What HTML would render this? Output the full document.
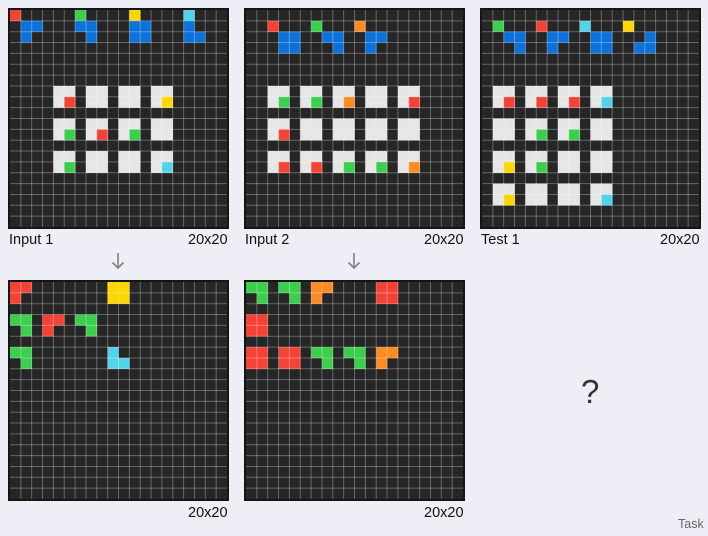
<!DOCTYPE html>
<html><head><meta charset="utf-8"><style>
body{margin:0;width:708px;height:536px;background:#eeeff6;font-family:"Liberation Sans",sans-serif;position:relative;overflow:hidden}
.g{position:absolute;width:217px;height:217px;border:2px solid #151515;background:#262626}
.lbl{position:absolute;font-size:14.5px;color:#111}
</style></head><body>
<div id="root"></div>
<div class="lbl" style="left:9px;top:232px">Input 1</div><div class="lbl" style="left:188px;top:232px">20x20</div>
<div class="lbl" style="left:245px;top:232px">Input 2</div><div class="lbl" style="left:424px;top:232px">20x20</div>
<div class="lbl" style="left:481px;top:232px">Test 1</div><div class="lbl" style="left:660px;top:232px">20x20</div>
<div class="lbl" style="left:188px;top:505px">20x20</div>
<div class="lbl" style="left:424px;top:505px">20x20</div>
<svg style="position:absolute;left:111px;top:252px" width="14" height="18"><path d="M7 1V16M1.5 10.5L7 16L12.5 10.5" stroke="#808080" stroke-width="1.6" fill="none"/></svg>
<svg style="position:absolute;left:347px;top:252px" width="14" height="18"><path d="M7 1V16M1.5 10.5L7 16L12.5 10.5" stroke="#808080" stroke-width="1.6" fill="none"/></svg>
<div style="position:absolute;left:581px;top:373px;font-size:33px;color:#333">?</div>
<div style="position:absolute;left:678px;top:517px;font-size:12.5px;color:#666">Task</div>
<script>
var C={R:'#f44336',G:'#3ccf4e',Y:'#ffd600',C:'#53d3ea',B:'#0c72d9',O:'#fb8c23',W:'#e6e6e6'};
function grid(x,y,cells){
 var s='<svg class="g" style="left:'+x+'px;top:'+y+'px" width="217" height="217" viewBox="0 0 217 217">';
 var c=217/20;
 cells.forEach(function(a){s+='<rect x="'+(a[1]*c)+'" y="'+(a[0]*c)+'" width="'+(c+0.2)+'" height="'+(c+0.2)+'" fill="'+C[a[2]]+'"/>';});
 for(var i=1;i<20;i++){var p=(i*c).toFixed(2);s+='<line x1="'+p+'" y1="0" x2="'+p+'" y2="217" stroke="rgba(255,255,255,0.3)" stroke-width="1"/><line y1="'+p+'" x1="0" y2="'+p+'" x2="217" stroke="rgba(255,255,255,0.3)" stroke-width="1"/>';}
 s+='</svg>';document.getElementById('root').insertAdjacentHTML('beforeend',s);
}
function blocks(rows,cols){var o=[];rows.forEach(function(r){cols.forEach(function(c){o.push([r,c,'W'],[r,c+1,'W'],[r+1,c,'W'],[r+1,c+1,'W']);});});return o;}
function P(str){return str.split(' ').map(function(t){var p=t.split(',');return [+p[0],+p[1],p[2]];});}
grid(8,8,blocks([7,10,13],[4,7,10,13]).concat(P('0,0,R 0,6,G 0,11,Y 0,16,C 1,1,B 1,2,B 1,6,B 1,7,B 1,11,B 1,12,B 1,16,B 2,1,B 2,7,B 2,11,B 2,12,B 2,16,B 2,17,B 8,5,R 8,14,Y 11,5,G 11,8,R 11,11,G 14,5,G 14,14,C')));
grid(244,8,blocks([7,10,13],[2,5,8,11,14]).concat(P('1,2,R 1,6,G 1,10,O 2,3,B 2,4,B 2,7,B 2,8,B 2,11,B 2,12,B 3,3,B 3,4,B 3,8,B 3,11,B 8,3,G 8,6,G 8,9,O 8,15,R 11,3,R 14,3,R 14,6,R 14,9,G 14,12,G 14,15,O')));
grid(480,8,blocks([7,10,13,16],[1,4,7,10]).concat(P('1,1,G 1,5,R 1,9,C 1,13,Y 2,2,B 2,3,B 2,6,B 2,7,B 2,10,B 2,11,B 2,15,B 3,3,B 3,6,B 3,10,B 3,11,B 3,14,B 3,15,B 8,2,R 8,5,R 8,8,R 8,11,C 11,5,G 11,8,G 14,2,Y 14,5,G 17,2,Y 17,11,C')));
grid(8,280,P('0,0,R 0,1,R 1,0,R 0,9,Y 0,10,Y 1,9,Y 1,10,Y 3,0,G 3,1,G 4,1,G 3,3,R 3,4,R 4,3,R 3,6,G 3,7,G 4,7,G 6,0,G 6,1,G 7,1,G 6,9,C 7,9,C 7,10,C'));
grid(244,280,P('0,0,G 0,1,G 1,1,G 0,3,G 0,4,G 1,4,G 0,6,O 0,7,O 1,6,O 0,12,R 0,13,R 1,12,R 1,13,R 3,0,R 3,1,R 4,0,R 4,1,R 6,0,R 6,1,R 7,0,R 7,1,R 6,3,R 6,4,R 7,3,R 7,4,R 6,6,G 6,7,G 7,7,G 6,9,G 6,10,G 7,10,G 6,12,O 6,13,O 7,12,O'));
</script>
</body></html>
